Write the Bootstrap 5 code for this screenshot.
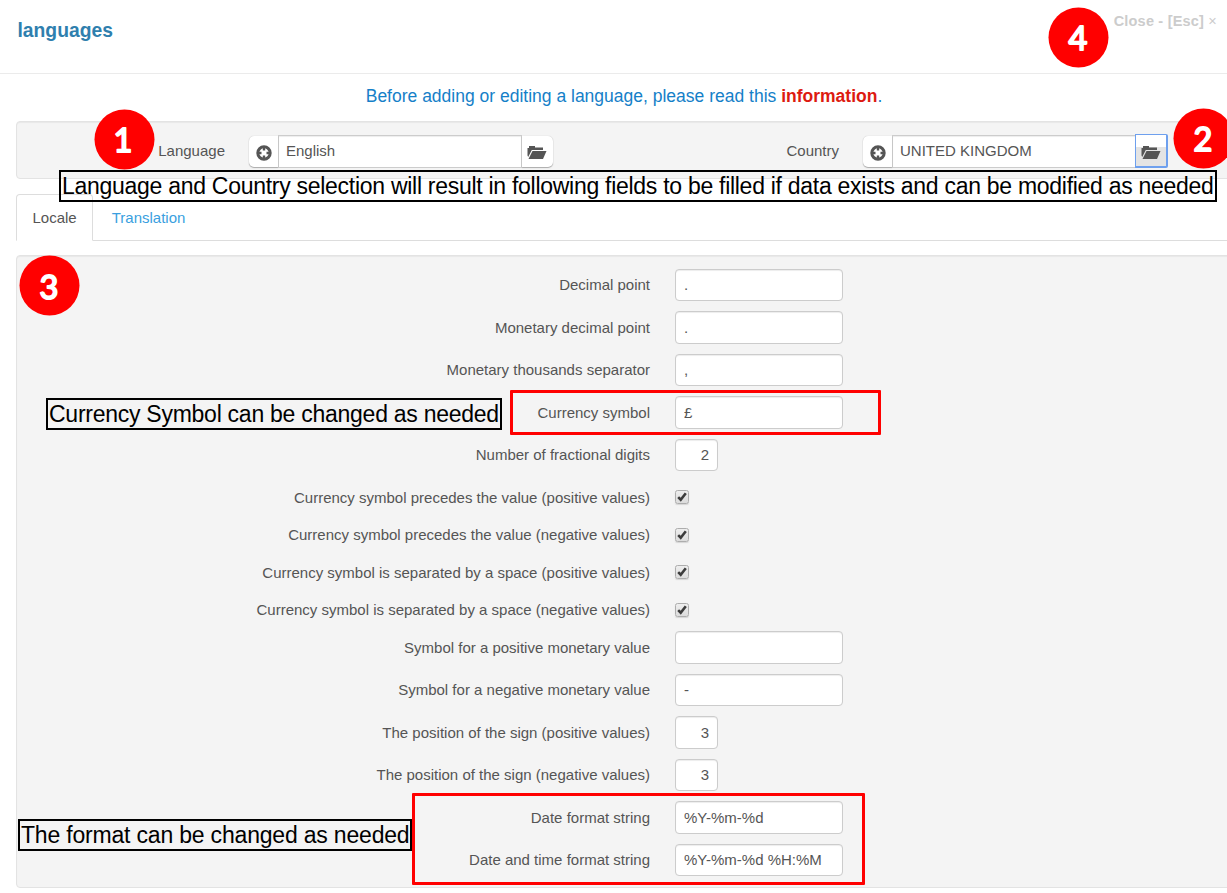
<!DOCTYPE html>
<html lang="en">
<head>
<meta charset="utf-8">
<meta name="viewport" content="width=device-width, initial-scale=1">
<title>languages</title>
<link href="https://cdn.jsdelivr.net/npm/bootstrap@5.3.0/dist/css/bootstrap.min.css" rel="stylesheet">
<style>
body{font-family:"Liberation Sans",Arial,sans-serif;font-size:15px;line-height:22.5px;color:#555;background:#fff;height:893px;overflow:hidden}
.page-head{height:74px;border-bottom:1px solid #ebebeb;padding:18px 10px 0 17.5px}
.page-head h1{font-size:19.3px;font-weight:700;color:#2f7fae;line-height:25px}
.close-link{color:#ccc;font-weight:700;font-size:14.5px;letter-spacing:.2px;margin-top:-9px;line-height:24px}
.notice{font-size:17.5px;line-height:24px;color:#1580c8;padding-left:21px;margin-top:10px;margin-bottom:13px}
.notice b{color:#dd1a10}
.main-area{width:1235px;margin-left:16px}
.well{background:#f4f4f4;border:1px solid #e3e3e3;border-radius:4px;box-shadow:inset 0 1px 1px rgba(0,0,0,.05)}
.picker-well{height:58px;padding-top:13px}
.picker{flex:0 0 614px;height:33px}
.picker-name{flex:0 0 208px;margin-right:24px;line-height:31px}
.picker .form-control{flex:0 0 244px;height:33px;border-radius:0;padding:0 7px 2px;margin:0!important}
.form-control{font-size:15px;color:#555;border:1px solid #ccc;box-shadow:inset 0 1px 1px rgba(0,0,0,.075);line-height:20px}
.picker .btn{flex:none;width:29px;height:31px;padding:2px 0 0;margin:1px 0 0!important;background:#fff;border:0;box-shadow:0 1px 1px #aaa,0 0 1px #bbb;display:flex;align-items:center;justify-content:center}
.picker .btn svg{flex:none}
.picker .btn:first-child{border-radius:5px 0 0 5px}
.picker .btn:last-child{width:31px;border-radius:0 5px 5px 0;padding-right:1px}
.picker .btn.picked{width:33px;height:34px;margin-top:-1px!important;border:1px solid #6ea0ee;border-width:1px 2px 2px 1px;box-shadow:none;border-radius:0 2px 2px 0;background:linear-gradient(#fff 38%,#e4e4e4 38%);margin-left:-1px!important;padding:4px 0 0}
.nav-tabs{margin-top:15px;height:47px;border-color:#ddd}
.nav-tabs .nav-link{height:47px;padding:12px 15.5px;color:#3a9fe0;border-radius:4px 4px 0 0}
.nav-tabs .nav-item+.nav-item .nav-link{padding-left:17.500px}
.nav-tabs .nav-link.active{color:#555;border-color:#ddd #ddd #fff}
.locale-well{margin-top:14px;height:633px;padding-top:12.7px}
.field{height:32.5px;margin-bottom:10px}
.field-check{height:27.5px;margin-bottom:10px}
.field-name{width:633px;margin-right:25px;text-align:right;line-height:32px;padding-top:.35px}
.field .form-control{width:168px;height:32.5px;border-radius:4px;padding:0 8px}
.field .form-control.digits{width:43px;text-align:right}
.tick{width:14px;height:14px;border:1px solid #adadad;border-radius:2.5px;background:linear-gradient(#eee,#dcdcdc);box-shadow:0 1px 1px #d5d5d5;margin-top:8.900px;display:block}
.tick svg{display:block}
.callout{position:absolute;border:2px solid #000;height:32px;font-size:23px;line-height:28px;color:#000;white-space:nowrap;padding-left:1px;letter-spacing:-.26px}
.callout.wide{letter-spacing:-.28px}
.callout.narrow{letter-spacing:-.19px}
.frame{position:absolute;border:3px solid #f00;border-radius:1px}
.marker{position:absolute;width:61px;height:61px}
.marker text{font:400 32.500px Lato,sans-serif;fill:#fff;stroke:#fff;stroke-width:1.9;stroke-linejoin:round;text-anchor:middle}
</style>
</head>
<body class="position-relative">
<svg width="0" height="0" class="d-none">
<symbol id="clear" viewBox="0 0 16 16"><circle cx="8" cy="8" r="6.200" fill="#fff" stroke="#555" stroke-width="3"/><path d="M8 3v2.500M8 10.500V13M3 8h2.500M10.500 8H13" stroke="#555" stroke-width="2.400"/></symbol>
<symbol id="folder" viewBox="0 0 20 15"><path d="M.5 10.500V3H2V1h6v1.500h8V5H4.800L1.200 12z" fill="#555"/><path d="M5.500 6h14L16 14H1.500z" fill="#555"/></symbol>
<symbol id="check" viewBox="0 0 12 12"><path d="M2.200 6.200l2.500 2.500L9.800 2.200" fill="none" stroke="#3c3c3c" stroke-width="2.600"/></symbol>
</svg>
<header class="page-head d-flex justify-content-between">
<h1 class="m-0">languages</h1><span class="close-link">Close - [Esc] <span class="fw-normal">×</span></span>
</header>
<p class="notice text-center">Before adding or editing a language, please read this <b>information</b>.</p>
<main class="main-area">
<section class="well picker-well d-flex">
<div class="picker d-flex"><label class="picker-name text-end">Language</label><div class="input-group flex-nowrap"><button class="btn" aria-label="Clear"><svg width="16" height="16"><use href="#clear"/></svg></button><input class="form-control" value="English"><button class="btn" aria-label="Browse"><svg width="20" height="15"><use href="#folder"/></svg></button></div></div>
<div class="picker d-flex"><label class="picker-name text-end">Country</label><div class="input-group flex-nowrap"><button class="btn" aria-label="Clear"><svg width="16" height="16"><use href="#clear"/></svg></button><input class="form-control" value="UNITED KINGDOM"><button class="btn picked" aria-label="Browse"><svg width="20" height="15"><use href="#folder"/></svg></button></div></div>
</section>
<ul class="nav nav-tabs"><li class="nav-item"><a class="nav-link active">Locale</a></li><li class="nav-item"><a class="nav-link">Translation</a></li></ul>
<section class="well locale-well">
<div class="field d-flex"><label class="field-name">Decimal point</label><input class="form-control" value="."></div>
<div class="field d-flex"><label class="field-name">Monetary decimal point</label><input class="form-control" value="."></div>
<div class="field d-flex"><label class="field-name">Monetary thousands separator</label><input class="form-control" value=","></div>
<div class="field d-flex"><label class="field-name">Currency symbol</label><input class="form-control" value="£"></div>
<div class="field d-flex"><label class="field-name">Number of fractional digits</label><input class="form-control digits" value="2"></div>
<div class="field-check d-flex"><label class="field-name">Currency symbol precedes the value (positive values)</label><span class="tick"><svg width="12" height="12"><use href="#check"/></svg></span></div>
<div class="field-check d-flex"><label class="field-name">Currency symbol precedes the value (negative values)</label><span class="tick"><svg width="12" height="12"><use href="#check"/></svg></span></div>
<div class="field-check d-flex"><label class="field-name">Currency symbol is separated by a space (positive values)</label><span class="tick"><svg width="12" height="12"><use href="#check"/></svg></span></div>
<div class="field-check d-flex"><label class="field-name">Currency symbol is separated by a space (negative values)</label><span class="tick"><svg width="12" height="12"><use href="#check"/></svg></span></div>
<div class="field d-flex"><label class="field-name">Symbol for a positive monetary value</label><input class="form-control" value=""></div>
<div class="field d-flex"><label class="field-name">Symbol for a negative monetary value</label><input class="form-control" value="-"></div>
<div class="field d-flex"><label class="field-name">The position of the sign (positive values)</label><input class="form-control digits" value="3"></div>
<div class="field d-flex"><label class="field-name">The position of the sign (negative values)</label><input class="form-control digits" value="3"></div>
<div class="field d-flex"><label class="field-name">Date format string</label><input class="form-control" value="%Y-%m-%d"></div>
<div class="field d-flex"><label class="field-name">Date and time format string</label><input class="form-control" value="%Y-%m-%d %H:%M"></div>
</section>
</main>
<!-- Annotations laid over the form -->
<div class="callout wide" style="left:59px;top:170px;width:1158px">Language and Country selection will result in following fields to be filled if data exists and can be modified as needed</div>
<div class="callout" style="left:46px;top:398px;width:456px">Currency Symbol can be changed as needed</div>
<div class="callout narrow" style="left:18px;top:819px;width:394px">The format can be changed as needed</div>
<div class="frame" style="left:510px;top:390px;width:371px;height:45px"></div>
<div class="frame" style="left:412px;top:793px;width:453px;height:92px"></div>
<svg class="marker" style="left:94px;top:109px"><circle cx="30.500" cy="30.500" r="30" fill="#f00"/><text x="29" y="43">1</text></svg>
<svg class="marker" style="left:1173px;top:108px"><circle cx="30.500" cy="30.500" r="30" fill="#f00"/><text x="30" y="43">2</text></svg>
<svg class="marker" style="left:19px;top:255px"><circle cx="30.500" cy="30.500" r="30" fill="#f00"/><text x="30" y="43.500">3</text></svg>
<svg class="marker" style="left:1048px;top:7px"><circle cx="30.500" cy="30.500" r="30" fill="#f00"/><text x="30" y="43">4</text></svg>
<script src="https://cdn.jsdelivr.net/npm/bootstrap@5.3.0/dist/js/bootstrap.bundle.min.js"></script>
</body>
</html>
